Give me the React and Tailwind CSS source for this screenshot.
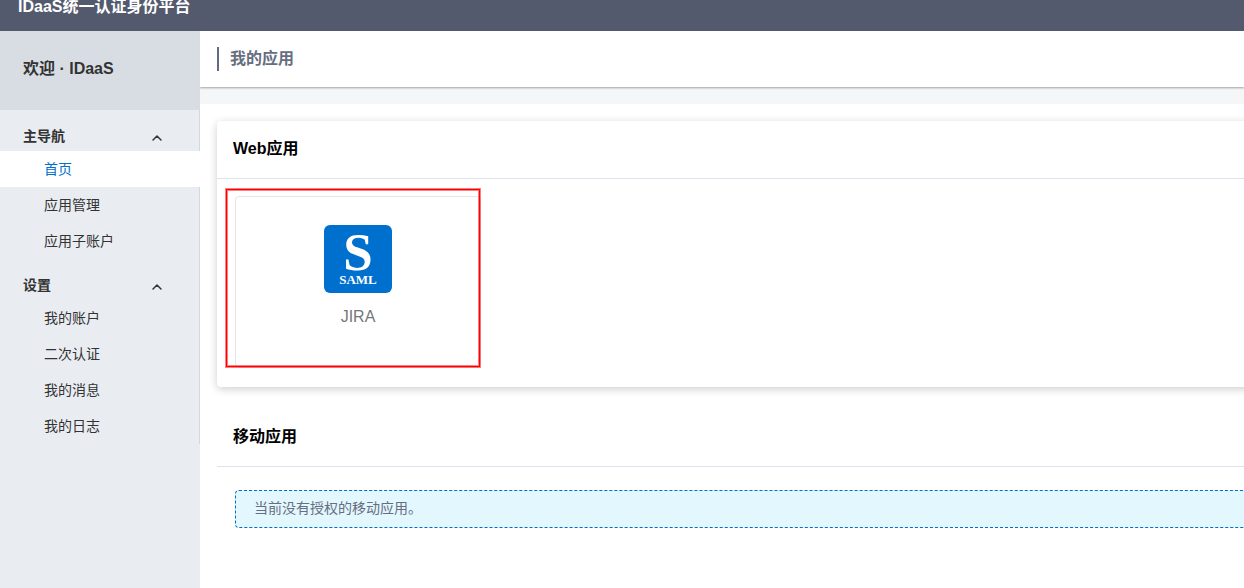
import { ChevronUp } from 'lucide-react';

const menu = [
  {
    title: '主导航',
    items: ['首页', '应用管理', '应用子账户'],
  },
  {
    title: '设置',
    items: ['我的账户', '二次认证', '我的消息', '我的日志'],
  },
];

const active = '首页';

function SamlIcon() {
  return (
    <svg viewBox="0 0 68 68" className="size-[68px] overflow-visible" aria-hidden="true">
      <rect width="68" height="68" rx="6" fill="#0070cf" />
      <g fill="#fff" fontFamily="'Liberation Serif', serif" fontWeight="bold" textAnchor="middle">
        <text x="34" y="45" fontSize="53">S</text>
        <text x="34" y="59" fontSize="13">SAML</text>
      </g>
    </svg>
  );
}

function MenuGroup({ title, items }) {
  return (
    <section>
      <button className="flex w-full items-end justify-between pt-4 pr-[34px] pb-[5px] pl-[23px] text-sm font-bold text-[#333]">
        {title}
        <ChevronUp className="size-4" strokeWidth={2.25} />
      </button>
      <ul>
        {items.map((item) => (
          <li key={item} className={item === active ? '-mr-px bg-white text-[#0070cc]' : 'text-[#333]'}>
            <a href="#" className="flex h-9 items-center pl-11 text-sm">{item}</a>
          </li>
        ))}
      </ul>
    </section>
  );
}

function Sidebar() {
  return (
    <aside className="relative w-[200px] shrink-0 bg-[#e9edf2]">
      <div className="bg-[#d8dde4] pt-[26px] pb-[29px] pl-[23px] text-base font-bold text-[#333]">
        欢迎 · IDaaS
      </div>
      <nav className="border-r border-[#d3d8de]">
        {menu.map((group) => (
          <MenuGroup key={group.title} {...group} />
        ))}
      </nav>
    </aside>
  );
}

export default function App() {
  return (
    <div className="flex min-h-screen flex-col overflow-hidden bg-white font-['Liberation_Sans','Noto_Sans_CJK_SC',sans-serif]">
      <header className="bg-[#535a6e] pb-[17px] pl-[18px] text-base leading-[14px] font-bold text-white">
        IDaaS统一认证身份平台
      </header>

      <div className="flex grow">
        <Sidebar />

        <main className="min-w-0 grow overflow-hidden">
          <div className="bg-[#f5f6f8] pb-[17px]">
            <div className="bg-white py-4 pl-[17px] shadow-[0_1px_2px_rgba(0,0,0,0.35)]">
              <h1 className="border-l-2 border-[#626b80] pl-[11px] text-base font-bold text-[#666e80]">我的应用</h1>
            </div>
          </div>

          <div className="-mr-2 pt-[17px] pl-[17px]">
            <section className="rounded bg-white shadow-[0_2px_8px_rgba(0,0,0,0.2)]">
              <h2 className="border-b border-[#dfe4ec] px-4 pt-4 pb-[17px] text-base font-bold text-black">Web应用</h2>
              <div className="px-[18px] pt-[17px] pb-[19px]">
                <div className="relative w-[246px]">
                  <a href="#" className="flex h-[172px] flex-col items-center rounded border border-[#e3e6eb] pt-7 text-[#777]">
                    <SamlIcon />
                    <span className="mt-3 text-base">JIRA</span>
                  </a>
                  <div className="pointer-events-none absolute -top-[7px] right-px bottom-px -left-[9px] border border-[#f00] shadow-[0_0_0_1px_rgba(255,0,0,0.5),inset_0_0_0_1px_rgba(255,0,0,0.5)]" />
                </div>
              </div>
            </section>

            <section className="mt-[22px]">
              <h2 className="border-b border-[#dfe4ec] px-4 pt-4 pb-[17px] text-base font-bold text-black">移动应用</h2>
              <p className="mt-[23px] ml-[18px] rounded border border-dashed border-[#0070cc] bg-[#e3f7ff] px-[18px] pt-[7px] pb-[9px] text-sm text-[#666e80]">
                当前没有授权的移动应用。
              </p>
            </section>
          </div>
        </main>
      </div>
    </div>
  );
}
